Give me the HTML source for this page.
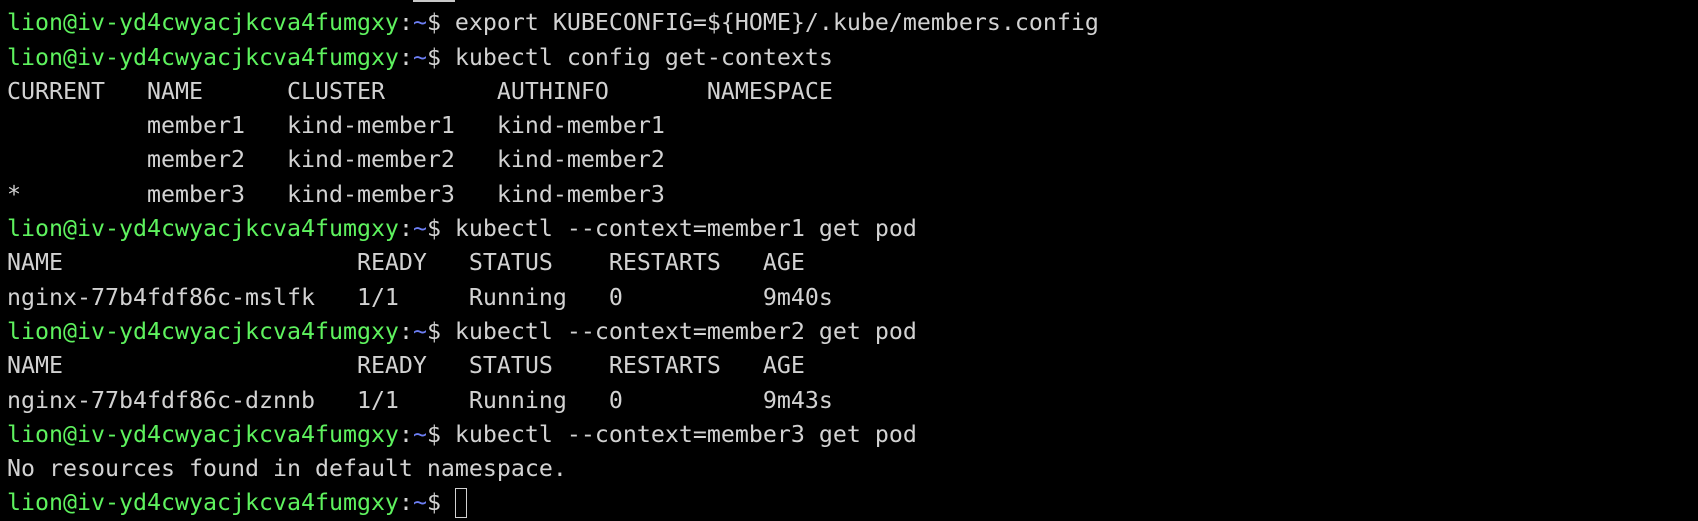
<!DOCTYPE html>
<html><head><meta charset="utf-8"><style>
html,body{margin:0;padding:0;background:#000;width:1698px;height:492px;overflow:hidden}
pre{position:absolute;left:7px;top:-28px;margin:0;font-family:"DejaVu Sans Mono","Liberation Mono",monospace;font-size:23.25px;line-height:34.3px;color:#d2d2d2;white-space:pre}
.g{color:#5ef25e}.b{color:#6d7ff5}
.hl{background:#c8c8c8;color:#000}
.cur{display:inline-block;width:12px;height:30px;border:1.5px solid #d2d2d2;box-sizing:border-box;vertical-align:-8px}
</style></head><body>
<pre>(         '        ,   '  '  <span class="hl">   </span>  '  '   '
<span class="g">lion@iv-yd4cwyacjkcva4fumgxy</span>:<span class="b">~</span>$ export KUBECONFIG=${HOME}/.kube/members.config
<span class="g">lion@iv-yd4cwyacjkcva4fumgxy</span>:<span class="b">~</span>$ kubectl config get-contexts
CURRENT   NAME      CLUSTER        AUTHINFO       NAMESPACE
          member1   kind-member1   kind-member1
          member2   kind-member2   kind-member2
*         member3   kind-member3   kind-member3
<span class="g">lion@iv-yd4cwyacjkcva4fumgxy</span>:<span class="b">~</span>$ kubectl --context=member1 get pod
NAME                     READY   STATUS    RESTARTS   AGE
nginx-77b4fdf86c-mslfk   1/1     Running   0          9m40s
<span class="g">lion@iv-yd4cwyacjkcva4fumgxy</span>:<span class="b">~</span>$ kubectl --context=member2 get pod
NAME                     READY   STATUS    RESTARTS   AGE
nginx-77b4fdf86c-dznnb   1/1     Running   0          9m43s
<span class="g">lion@iv-yd4cwyacjkcva4fumgxy</span>:<span class="b">~</span>$ kubectl --context=member3 get pod
No resources found in default namespace.
<span class="g">lion@iv-yd4cwyacjkcva4fumgxy</span>:<span class="b">~</span>$ <span class="cur"></span></pre>
</body></html>
